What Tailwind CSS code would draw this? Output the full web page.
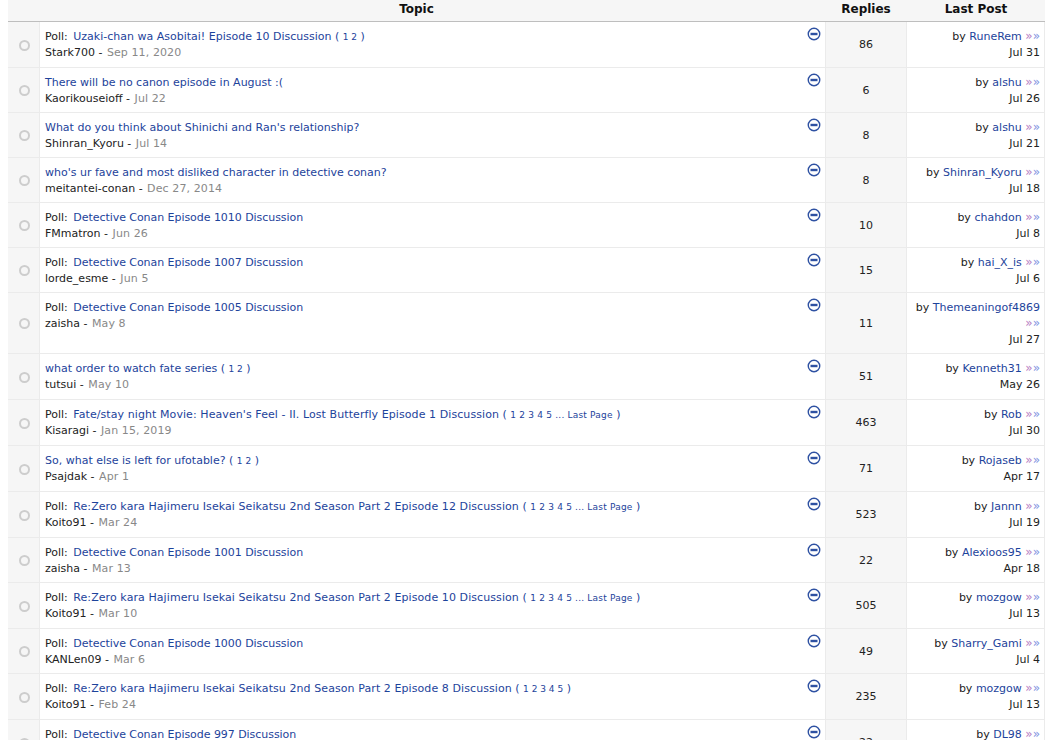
<!DOCTYPE html>
<html lang="en">
<head>
  <meta charset="UTF-8" />
  <title>Forum Topics</title>
  <script src="https://cdn.jsdelivr.net/npm/@tailwindcss/browser@4"></script>
</head>
<body class="bg-white h-[740px] overflow-hidden font-['Verdana','DejaVu_Sans',sans-serif] text-[11px] text-[#222]">
  <div class="ml-2 w-[1037px]">
    <div class="flex h-[22px] pt-px bg-[#f6f6f6] border-b border-[#bebebe] font-bold text-[12px] leading-[16px] text-[#111]">
      <div class="flex-1 text-center">Topic</div>
      <div class="w-[82px] text-center">Replies</div>
      <div class="w-[138px] text-center">Last Post</div>
    </div>
    <div id="rows"></div>
  </div>

  <script>
    const page = (links) => ` <span class="text-[#1d439b]">( ${links} )</span>`;
    const short = page('<span class="text-[9px]">1 2</span>');
    const long = page('<span class="text-[9px] tracking-[0.2px]">1 2 3 4 5 ... Last Page</span>');
    const wide = 'tracking-[0.08px]';
    const tight = 'tracking-[-0.05px]';

    const topics = [
      { h: 'h-[46px]', poll: true, title: 'Uzaki-chan wa Asobitai! Episode 10 Discussion', pages: short, author: 'Stark700', date: 'Sep 11, 2020', replies: '86', by: 'RuneRem', last: 'Jul 31' },
      { h: 'h-[45px]', title: 'There will be no canon episode in August :(', author: 'Kaorikouseioff', date: 'Jul 22', replies: '6', by: 'alshu', last: 'Jul 26' },
      { h: 'h-[45px]', title: "What do you think about Shinichi and Ran's relationship?", author: 'Shinran_Kyoru', date: 'Jul 14', replies: '8', by: 'alshu', last: 'Jul 21' },
      { h: 'h-[45px]', title: "who's ur fave and most disliked character in detective conan?", author: 'meitantei-conan', date: 'Dec 27, 2014', replies: '8', by: 'Shinran_Kyoru', last: 'Jul 18' },
      { h: 'h-[45px]', poll: true, fit: tight, title: 'Detective Conan Episode 1010 Discussion', author: 'FMmatron', date: 'Jun 26', replies: '10', by: 'chahdon', last: 'Jul 8' },
      { h: 'h-[45px]', poll: true, fit: tight, title: 'Detective Conan Episode 1007 Discussion', author: 'lorde_esme', date: 'Jun 5', replies: '15', by: 'hai_X_is', last: 'Jul 6' },
      { h: 'h-[61px]', poll: true, fit: tight, title: 'Detective Conan Episode 1005 Discussion', author: 'zaisha', date: 'May 8', replies: '11', by: 'Themeaningof4869', last: 'Jul 27' },
      { h: 'h-[46px]', title: 'what order to watch fate series', pages: short, author: 'tutsui', date: 'May 10', replies: '51', by: 'Kenneth31', last: 'May 26' },
      { h: 'h-[46px]', poll: true, fit: wide, title: "Fate/stay night Movie: Heaven's Feel - II. Lost Butterfly Episode 1 Discussion", pages: long, author: 'Kisaragi', date: 'Jan 15, 2019', replies: '463', by: 'Rob', last: 'Jul 30' },
      { h: 'h-[46px]', title: 'So, what else is left for ufotable?', pages: short, author: 'Psajdak', date: 'Apr 1', replies: '71', by: 'Rojaseb', last: 'Apr 17' },
      { h: 'h-[46px]', poll: true, fit: wide, title: 'Re:Zero kara Hajimeru Isekai Seikatsu 2nd Season Part 2 Episode 12 Discussion', pages: long, author: 'Koito91', date: 'Mar 24', replies: '523', by: 'Jannn', last: 'Jul 19' },
      { h: 'h-[45px]', poll: true, fit: tight, title: 'Detective Conan Episode 1001 Discussion', author: 'zaisha', date: 'Mar 13', replies: '22', by: 'Alexioos95', last: 'Apr 18' },
      { h: 'h-[46px]', poll: true, fit: wide, title: 'Re:Zero kara Hajimeru Isekai Seikatsu 2nd Season Part 2 Episode 10 Discussion', pages: long, author: 'Koito91', date: 'Mar 10', replies: '505', by: 'mozgow', last: 'Jul 13' },
      { h: 'h-[45px]', poll: true, fit: tight, title: 'Detective Conan Episode 1000 Discussion', author: 'KANLen09', date: 'Mar 6', replies: '49', by: 'Sharry_Gami', last: 'Jul 4' },
      { h: 'h-[46px]', poll: true, fit: wide, title: 'Re:Zero kara Hajimeru Isekai Seikatsu 2nd Season Part 2 Episode 8 Discussion', pages: page('<span class="text-[9px]">1 2 3 4 5</span>'), author: 'Koito91', date: 'Feb 24', replies: '235', by: 'mozgow', last: 'Jul 13' },
      { h: 'h-[46px]', poll: true, fit: tight, title: 'Detective Conan Episode 997 Discussion', author: 'DL98', date: 'Feb 20', replies: '22', by: 'DL98', last: 'Jul 2' },
    ];

    document.getElementById('rows').innerHTML = topics.map(t => `
      <div class="flex ${t.h} border-b border-[#ebebeb]">
        <div class="w-[32px] shrink-0 flex items-center justify-center pt-px pl-px bg-[#f6f6f6] border-r border-[#ebebeb]">
          <span class="w-[11px] h-[11px] rounded-full border-2 border-[#cdcdcd]"></span>
        </div>
        <div class="flex-1 relative pl-[5px] pt-[7px] leading-[16px]">
          <div>${t.poll ? '<span class="mr-[2px]">Poll:</span> ' : ''}<a class="text-[#1d439b] ${t.fit || ''}">${t.title}</a>${t.pages || ''}</div>
          <div>${t.author} - <span class="ml-px tracking-[0.1px] text-[#888]">${t.date}</span></div>
          <svg class="absolute right-[4px] top-[5px]" width="14" height="14" viewBox="0 0 14 14" fill="none">
            <circle cx="7" cy="7" r="5.75" stroke="#2e51a2" stroke-width="1.4"/>
            <rect x="3.5" y="5.8" width="7" height="2.4" fill="#2e51a2"/>
          </svg>
        </div>
        <div class="w-[82px] shrink-0 flex items-center justify-center pt-[2px] bg-[#f6f6f6] border-x border-[#ebebeb]">${t.replies}</div>
        <div class="w-[138px] shrink-0 pr-[4px] pt-[7px] text-right leading-[16px] border-r border-[#ebebeb]">
          <div>by <a class="text-[#1d439b]">${t.by}</a> <span class="text-[12px] leading-none"><span class="text-[#b77fc4]">»</span><span class="text-[#7f95df]">»</span></span></div>
          <div>${t.last}</div>
        </div>
      </div>`).join('');
  </script>
</body>
</html>
